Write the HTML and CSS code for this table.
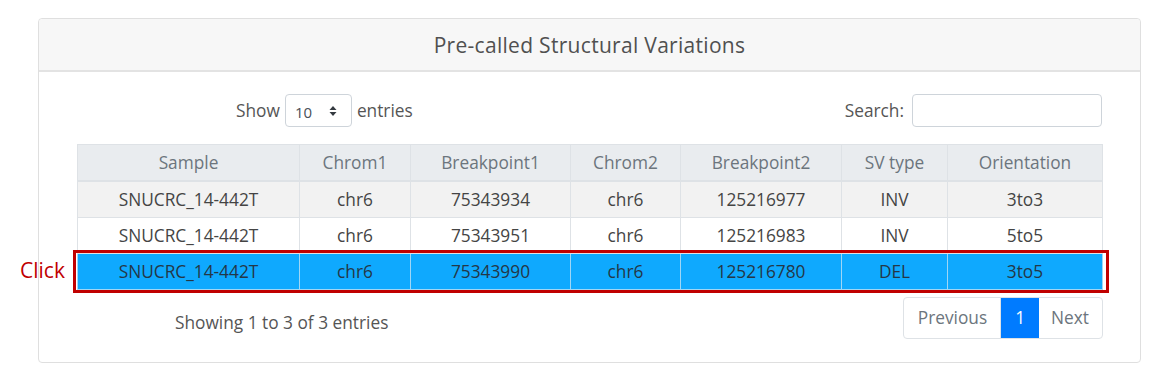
FILE: index.html
```html
<!DOCTYPE html>
<html>
<head>
<meta charset="utf-8">
<link rel="stylesheet" href="styles.css">
</head>
<body>
<div class="page">
  <div class="card">
    <div class="card-header">Pre-called Structural Variations</div>
    <div class="card-body">
      <div class="controls">
        <div class="length">
          <span>Show</span>
          <div class="select"><span>10</span>
            <svg width="8" height="12" viewBox="0 0 8 12"><path d="M4 1 L7.5 5 H0.5 Z M4 11 L7.5 7 H0.5 Z" fill="#343a40"/></svg>
          </div>
          <span>entries</span>
        </div>
        <div class="search">
          <span>Search:</span>
          <div class="input"></div>
        </div>
      </div>
      <div class="table-wrap">
        <table>
          <colgroup>
            <col style="width:222px"><col style="width:111px"><col style="width:160px"><col style="width:110px"><col style="width:161px"><col style="width:106px"><col style="width:155px">
          </colgroup>
          <thead>
            <tr><th>Sample</th><th>Chrom1</th><th>Breakpoint1</th><th>Chrom2</th><th>Breakpoint2</th><th>SV type</th><th>Orientation</th></tr>
          </thead>
          <tbody>
            <tr class="odd"><td>SNUCRC_14-442T</td><td>chr6</td><td>75343934</td><td>chr6</td><td>125216977</td><td>INV</td><td>3to3</td></tr>
            <tr><td>SNUCRC_14-442T</td><td>chr6</td><td>75343951</td><td>chr6</td><td>125216983</td><td>INV</td><td>5to5</td></tr>
            <tr class="selected"><td>SNUCRC_14-442T</td><td>chr6</td><td>75343990</td><td>chr6</td><td>125216780</td><td>DEL</td><td>3to5</td></tr>
          </tbody>
        </table>
        <div class="highlight"></div>
        <div class="click-label">Click</div>
      </div>
      <div class="footer">
        <div class="info">Showing 1 to 3 of 3 entries</div>
        <div class="pagination">
          <span class="page-link disabled">Previous</span>
          <span class="page-link active">1</span>
          <span class="page-link disabled">Next</span>
        </div>
      </div>
    </div>
  </div>
</div>
</body>
</html>
```
FILE: styles.css
```css
html, body {
  margin: 0;
  padding: 0;
  background: #fff;
}
body {
  font-family: "Open Sans", "Noto Sans", sans-serif;
  color: #495057;
  font-size: 17.3px;
}
.page {
  padding: 18px 0 0 38px;
  width: 1103px;
}
.card {
  border: 1px solid #dfdfdf;
  border-radius: 4px;
  background: #fff;
  height: 345px;
  box-sizing: border-box;
}
.card-header {
  background: #f7f7f7;
  border-bottom: 2px solid #e3e3e3;
  height: 53px;
  box-sizing: border-box;
  display: flex;
  align-items: center;
  justify-content: center;
  font-family: "Open Sans", sans-serif;
  font-size: 21px;
  letter-spacing: 0.3px;
  color: #505050;
  border-radius: 4px 4px 0 0;
  padding-top: 1px;
}
.card-body {
  padding: 22px 38px 0 38px;
}
.controls {
  display: flex;
  justify-content: space-between;
  align-items: center;
  height: 33px;
}
.length {
  display: flex;
  align-items: center;
  gap: 5px;
  padding-left: 159px;
  color: #555;
}
.select {
  width: 67px;
  height: 33px;
  box-sizing: border-box;
  border: 1px solid #ced4da;
  border-radius: 4px;
  display: flex;
  align-items: center;
  justify-content: space-between;
  padding: 3px 14px 0 9px;
  font-size: 15px;
  color: #495057;
}
.select svg { margin-top: -3px; }
.search {
  display: flex;
  align-items: center;
  gap: 8px;
  color: #555;
}
.input {
  width: 190px;
  height: 33px;
  box-sizing: border-box;
  border: 1px solid #ced4da;
  border-radius: 4px;
}
.table-wrap {
  position: relative;
  margin-top: 17px;
}
table {
  border-collapse: collapse;
  table-layout: fixed;
  width: 1025px;
}
th, td {
  text-align: center;
  border: 1px solid #dee2e6;
  font-weight: 400;
  padding: 0;
}
th {
  height: 35px;
  background: #e9ecef;
  color: #6c757d;
  border-bottom: 2px solid #dee2e6;
}
td {
  height: 35px;
  color: #444;
}
tr.odd td {
  background: #f2f2f2;
}
tr.selected td {
  background: #0fa9fe;
  color: #243746;
  border-color: #9fd6f5;
}
.highlight {
  position: absolute;
  left: -4px;
  top: 106px;
  width: 1030px;
  height: 37px;
  border: 3px solid #c00000;
  pointer-events: none;
}
.click-label {
  position: absolute;
  left: -57px;
  top: 112px;
  font-family: "Open Sans", sans-serif;
  font-size: 21px;
  color: #c00000;
}
.footer {
  display: flex;
  justify-content: space-between;
  align-items: center;
  margin-top: 7px;
}
.info {
  padding-left: 98px;
  padding-top: 9px;
  color: #555;
}
.pagination {
  display: flex;
  border: 1px solid #dee2e6;
  border-radius: 4px;
  margin-right: -1px;
}
.page-link {
  height: 40px;
  line-height: 40px;
  padding: 0 12px;
  color: #6c757d;
}
.page-link.disabled:first-child {
  border-right: 1px solid #dee2e6;
  padding: 0 13px 0 14px;
}
.page-link.active {
  background: #007bff;
  color: #fff;
  padding: 0 14px;
}
.page-link.disabled:last-child {
  padding: 0 13px 0 12px;
}
```
